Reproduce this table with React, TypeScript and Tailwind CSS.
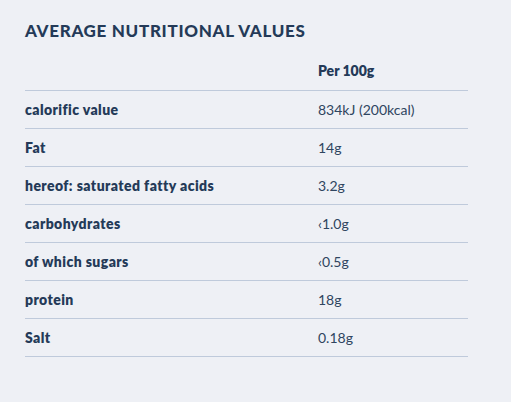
const rows = [
  { label: 'calorific value', value: '834kJ (200kcal)' },
  { label: 'Fat', value: '14g' },
  { label: 'hereof: saturated fatty acids', value: '3.2g' },
  { label: 'carbohydrates', value: '‹1.0g' },
  { label: 'of which sugars', value: '‹0.5g' },
  { label: 'protein', value: '18g' },
  { label: 'Salt', value: '0.18g' },
]

export default function App() {
  return (
    <div className="w-[511px] h-[402px] bg-[#eef0f5] pl-[25px] pt-[21px] font-['Lato',sans-serif] text-[#243a58]">
      <h2 className="text-[17px] leading-5 font-black tracking-[0.04em] uppercase">
        Average nutritional values
      </h2>
      <table className="mt-[10px] w-[443px] border-collapse text-[14px]">
        <thead>
          <tr className="h-[39px] border-b border-[#bfcadb]">
            <th className="w-[293px]"></th>
            <th className="text-left font-extrabold">Per 100g</th>
          </tr>
        </thead>
        <tbody>
          {rows.map(r => (
            <tr key={r.label} className="h-[38px] border-b border-[#bfcadb]">
              <td className="font-extrabold tracking-[0.03em]">{r.label}</td>
              <td className="text-[#2f4560]">{r.value}</td>
            </tr>
          ))}
        </tbody>
      </table>
    </div>
  )
}
